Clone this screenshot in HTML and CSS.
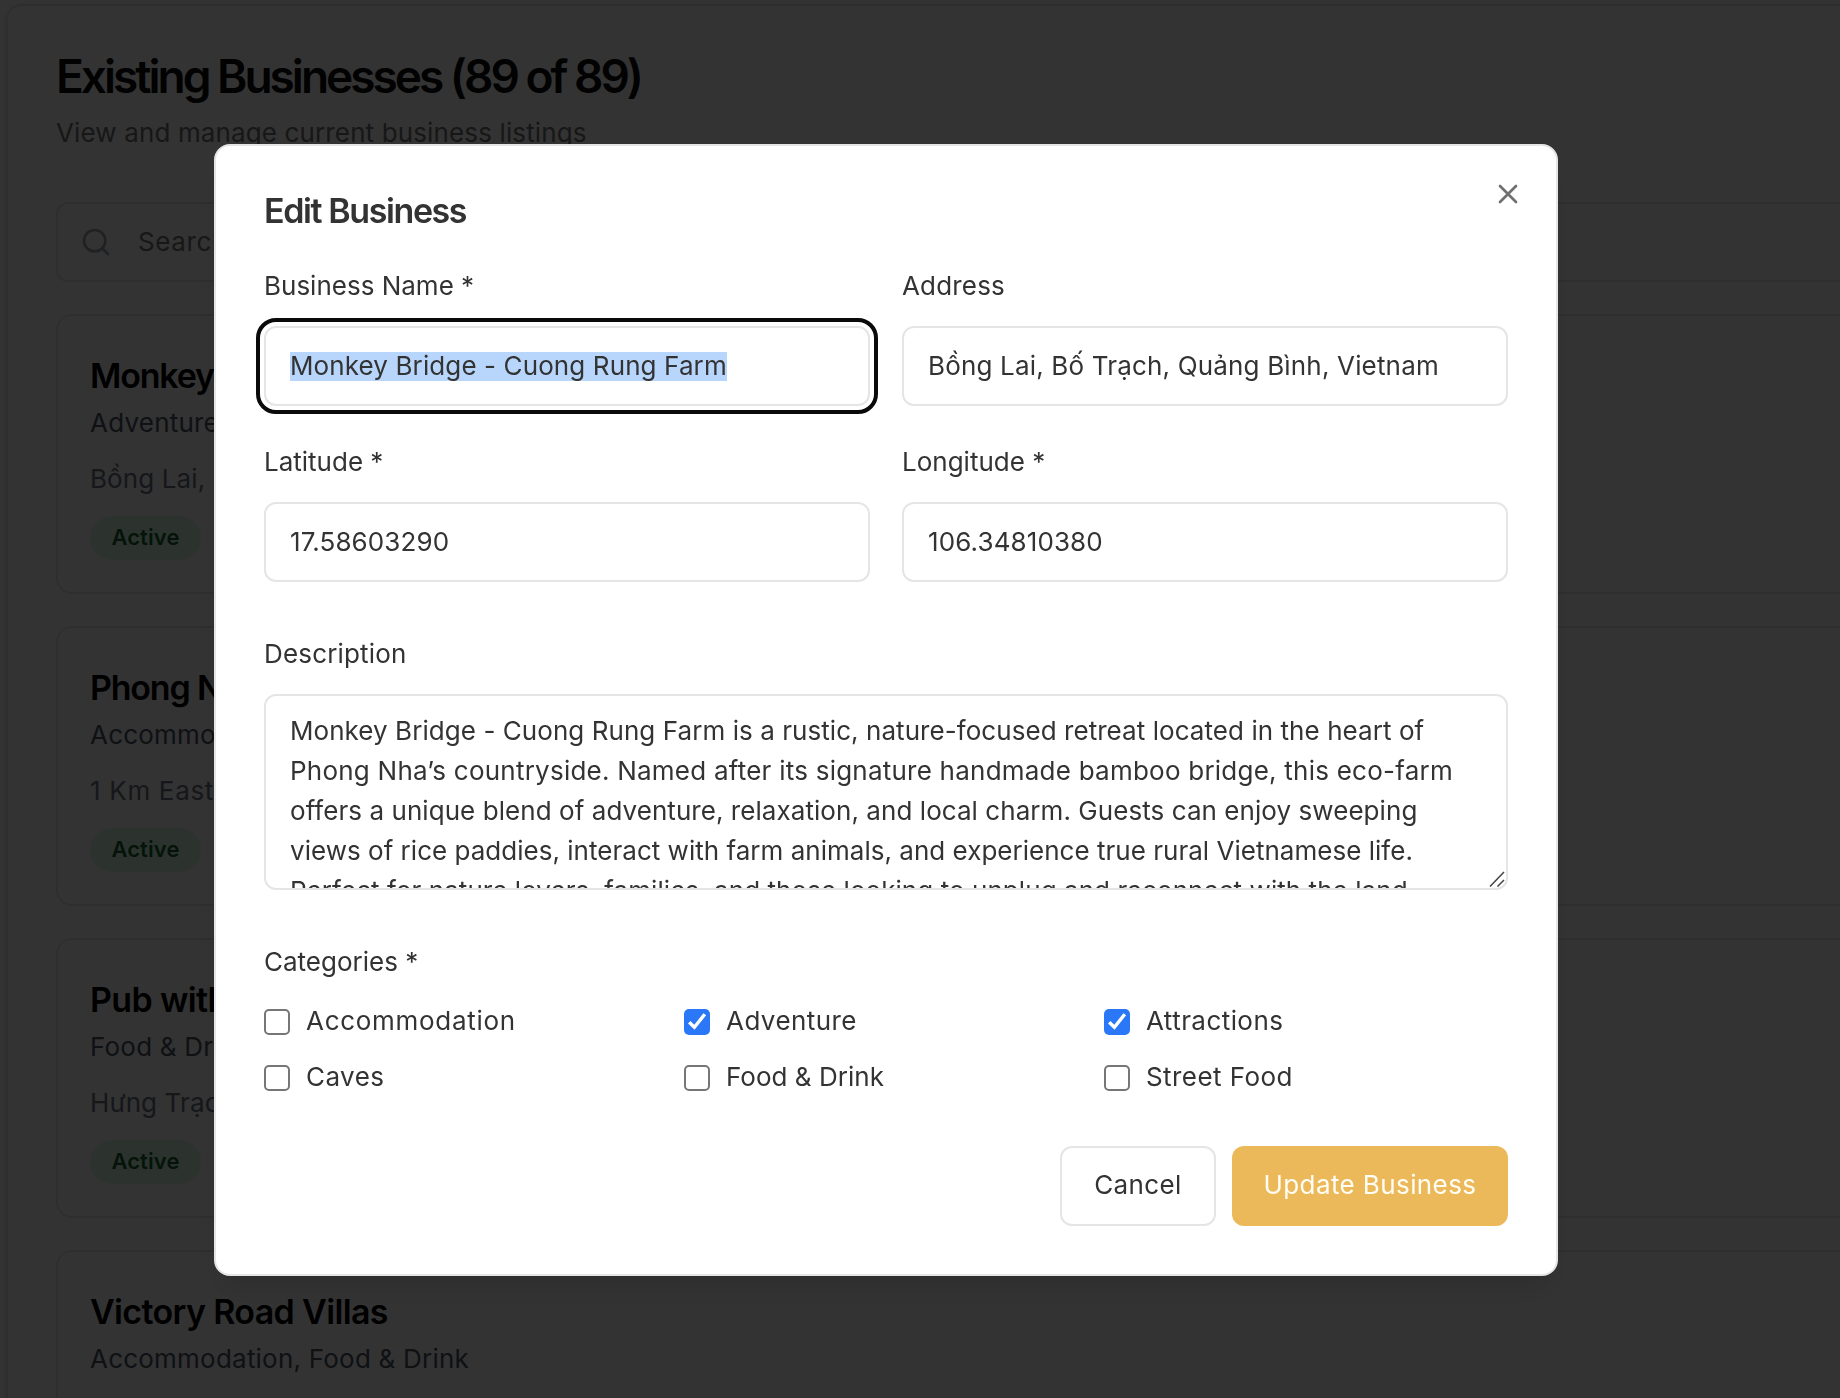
FILE: index.html
```html
<!DOCTYPE html>
<html lang="en">
<head>
  <meta charset="utf-8">
  <title>Edit Business</title>
  <link rel="stylesheet" href="styles.css">
</head>
<body>
  <main class="panel">
    <h1 class="panel-title">Existing Businesses (89 of 89)</h1>
    <p class="panel-subtitle">View and manage current business listings</p>
    <div class="search">
      <svg class="search-icon" viewBox="0 0 24 24" fill="none" stroke="currentColor" stroke-width="2" stroke-linecap="round" stroke-linejoin="round"><circle cx="11" cy="11" r="8"/><path d="m21 21-4.3-4.3"/></svg>
      <span class="search-text">Search</span>
    </div>
    <div class="cards">
      <article class="card">
        <h2 class="card-title tight">Monkey Bridge</h2>
        <p class="card-categories">Adventure</p>
        <p class="card-address">Bồng Lai, Bố</p>
        <span class="badge">Active</span>
      </article>
      <article class="card">
        <h2 class="card-title tight">Phong Nha</h2>
        <p class="card-categories">Accommodation</p>
        <p class="card-address loose">1 Km East</p>
        <span class="badge">Active</span>
      </article>
      <article class="card">
        <h2 class="card-title">Pub with</h2>
        <p class="card-categories">Food &amp; Drink</p>
        <p class="card-address">Hưng Trạch</p>
        <span class="badge">Active</span>
      </article>
      <article class="card last">
        <h2 class="card-title">Victory Road Villas</h2>
        <p class="card-categories">Accommodation, Food &amp; Drink</p>
      </article>
    </div>
  </main>

  <div class="overlay">
    <section class="modal" role="dialog" aria-modal="true">
      <button class="close" aria-label="Close">
        <svg viewBox="0 0 24 24" fill="none" stroke="currentColor" stroke-width="2" stroke-linecap="round"><path d="M18 6 6 18M6 6l12 12"/></svg>
      </button>
      <h2 class="modal-title">Edit Business</h2>
      <div class="fields">
        <div class="field">
          <span class="label">Business Name *</span>
          <div class="input focused"><span class="selected">Monkey Bridge - Cuong Rung Farm</span></div>
        </div>
        <div class="field">
          <span class="label spaced">Address</span>
          <div class="input spaced">Bồng Lai, Bố Trạch, Quảng Bình, Vietnam</div>
        </div>
        <div class="field">
          <span class="label">Latitude *</span>
          <div class="input">17.58603290</div>
        </div>
        <div class="field">
          <span class="label">Longitude *</span>
          <div class="input">106.34810380</div>
        </div>
      </div>
      <div class="field section">
        <span class="label spaced">Description</span>
        <div class="textarea">
          <div class="line">Monkey Bridge - Cuong Rung Farm is a rustic, nature-focused retreat located in the heart of</div>
          <div class="line wide">Phong Nha’s countryside. Named after its signature handmade bamboo bridge, this eco-farm</div>
          <div class="line">offers a unique blend of adventure, relaxation, and local charm. Guests can enjoy sweeping</div>
          <div class="line snug">views of rice paddies, interact with farm animals, and experience true rural Vietnamese life.</div>
          <div class="line">Perfect for nature lovers, families, and those looking to unplug and reconnect with the land.</div>
          <svg class="resizer" viewBox="0 0 16 16" fill="none" stroke="currentColor" stroke-width="1.5"><path d="M1 15.5 15 1M8.5 15.5 15 9"/></svg>
        </div>
      </div>
      <div class="section">
        <span class="label">Categories *</span>
        <div class="options">
          <label class="option airy"><span class="box"></span>Accommodation</label>
          <label class="option"><span class="box checked"><svg viewBox="0 0 26 26" fill="none" stroke="currentColor" stroke-width="3.4"><path d="M5.2 13.2 10.4 18.2 20.8 5.2"/></svg></span>Adventure</label>
          <label class="option"><span class="box checked"><svg viewBox="0 0 26 26" fill="none" stroke="currentColor" stroke-width="3.4"><path d="M5.2 13.2 10.4 18.2 20.8 5.2"/></svg></span>Attractions</label>
          <label class="option"><span class="box"></span>Caves</label>
          <label class="option snug"><span class="box"></span>Food &amp; Drink</label>
          <label class="option"><span class="box"></span>Street Food</label>
        </div>
      </div>
      <div class="actions">
        <button class="button cancel">Cancel</button>
        <button class="button submit">Update Business</button>
      </div>
    </section>
  </div>
</body>
</html>
```
FILE: styles.css
```css
* {
  box-sizing: border-box;
  margin: 0;
}

body {
  height: 1398px;
  overflow: hidden;
  padding: 4px 0 0 6px;
  background: #fff;
  color: #333;
  font: 400 26px/40px Inter, "Noto Sans", sans-serif;
  letter-spacing: 0.11px;
}

/* Listing page behind the dialog */
.panel {
  height: 1394px;
  overflow: hidden;
  padding: 42px 0 0 48px;
  border: 2px solid #e5e5e5;
  border-width: 2px 0 0 2px;
  border-radius: 16px 0 0 0;
  box-shadow: 0 2px 6px rgba(0, 0, 0, 0.1);
}

.panel-title {
  color: #0a0a0a;
  font-size: 46px;
  font-weight: 600;
  line-height: 56px;
  letter-spacing: -3px;
  white-space: nowrap;
}

.panel-subtitle {
  margin-top: 9px;
  color: #737373;
  letter-spacing: 0.13px;
}

.search {
  display: flex;
  align-items: center;
  gap: 26px;
  height: 80px;
  margin-top: 49px;
  padding-left: 22px;
  border: 2px solid #e5e5e5;
  border-right: 0;
  border-radius: 12px 0 0 12px;
}

.search-icon {
  width: 32px;
  height: 32px;
  color: #9ca3af;
}

.search-text {
  color: #737373;
  letter-spacing: 0.62px;
}

.cards {
  display: flex;
  flex-direction: column;
  gap: 32px;
  margin-top: 32px;
}

.card {
  height: 280px;
  padding: 40px 32px 0;
  border: 2px solid #e5e5e5;
  border-right: 0;
  border-radius: 16px 0 0 16px;
}

.card.last {
  height: 148px;
  border-bottom: 0;
  border-radius: 16px 0 0 0;
}

.card-title {
  color: #000;
  font-size: 34px;
  font-weight: 600;
  line-height: 40px;
  letter-spacing: -0.65px;
}

.card-title.tight {
  letter-spacing: -1.2px;
}

.card-categories {
  margin-top: 7px;
  color: #4b5563;
  letter-spacing: 0.22px;
}

.card-address {
  margin-top: 16px;
  color: #6b7280;
}

.card-address.loose {
  letter-spacing: 0.68px;
}

.badge {
  display: block;
  width: 111px;
  height: 44px;
  margin-top: 17px;
  border-radius: 22px;
  background: #dcfce7;
  color: #166534;
  font-size: 22px;
  font-weight: 600;
  line-height: 43px;
  text-align: center;
}

/* Dialog */
.overlay {
  position: fixed;
  inset: 0;
  display: flex;
  align-items: flex-start;
  padding: 144px 0 0 214px;
  background: rgba(0, 0, 0, 0.8);
}

.modal {
  position: relative;
  width: 1344px;
  height: 1132px;
  padding: 48px;
  border: 2px solid #e5e5e5;
  border-radius: 16px;
  background: #fff;
  box-shadow: 0 20px 30px -6px rgba(0, 0, 0, 0.1), 0 8px 12px -8px rgba(0, 0, 0, 0.1);
}

.close {
  position: absolute;
  top: 32px;
  right: 32px;
  width: 32px;
  height: 32px;
  padding: 0;
  border: 0;
  background: none;
  color: #707070;
}

.close svg {
  display: block;
}

.modal-title {
  font-size: 34px;
  font-weight: 600;
  line-height: 34px;
  letter-spacing: -1.4px;
}

.fields {
  display: grid;
  grid-template-columns: 1fr 1fr;
  gap: 36px 32px;
  margin-top: 38px;
}

.field {
  display: flex;
  flex-direction: column;
  gap: 20px;
}

.label {
  display: block;
  letter-spacing: 0;
}

.spaced {
  letter-spacing: 0.17px;
}

.section {
  margin-top: 52px;
}

.input {
  display: flex;
  align-items: center;
  height: 80px;
  padding: 0 24px;
  border: 2px solid #e5e5e5;
  border-radius: 12px;
  white-space: nowrap;
}

.input.focused {
  outline: 4px solid #0a0a0a;
  outline-offset: 4px;
}

.selected {
  height: 29px;
  background: #b8d6fb;
  line-height: 27px;
}

.textarea {
  position: relative;
  height: 196px;
  padding: 15px 24px 0;
  overflow: hidden;
  border: 2px solid #e5e5e5;
  border-radius: 12px;
  white-space: nowrap;
}

.line {
  letter-spacing: 0.06px;
}

.line.wide {
  letter-spacing: 0.23px;
}

.line.snug {
  letter-spacing: 0.02px;
}

.resizer {
  position: absolute;
  right: 1px;
  bottom: 1px;
  width: 16px;
  height: 16px;
  color: #444;
}

.options {
  display: grid;
  grid-template-columns: repeat(3, 1fr);
  gap: 16px;
  margin-top: 19px;
}

.option {
  display: flex;
  align-items: center;
  gap: 16px;
  letter-spacing: 0.44px;
}

.option.airy {
  letter-spacing: 0.7px;
}

.option.snug {
  letter-spacing: 0.02px;
}

.box {
  width: 26px;
  height: 26px;
  margin-top: 2px;
  border: 2px solid #767676;
  border-radius: 5px;
}

.box.checked {
  border: 0;
  background: #2a78f8;
  color: #fff;
}

.box svg {
  display: block;
}

.actions {
  display: flex;
  justify-content: flex-end;
  gap: 16px;
  margin-top: 49px;
}

.button {
  height: 80px;
  padding: 0 0 2px;
  border: 0;
  border-radius: 12px;
  font: inherit;
  letter-spacing: 0.4px;
}

.cancel {
  width: 156px;
  border: 2px solid #e5e5e5;
  background: #fff;
  color: #333;
}

.submit {
  width: 276px;
  background: #ebb959;
  color: #fffdf5;
}
```
